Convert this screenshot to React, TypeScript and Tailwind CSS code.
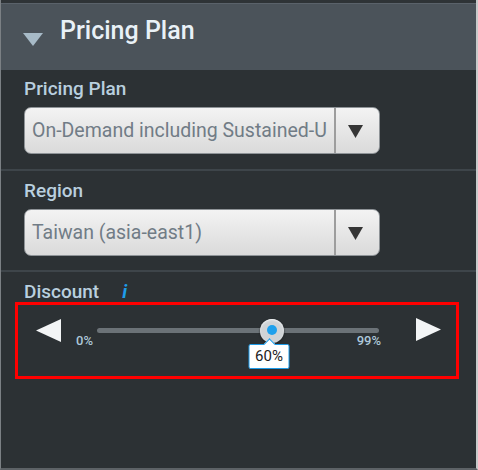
function Select({ value }: { value: string }) {
  return (
    <div className="flex h-[47px] w-[356px] overflow-hidden rounded-[7px] border border-[#8e9397] bg-linear-to-b from-[#f3f3f3] to-[#dadada]">
      <div className="flex flex-1 items-center overflow-hidden whitespace-nowrap pl-[7px] text-[19.5px] text-[#717c86]">
        {value}
      </div>
      <div className="w-[2px] bg-[#9d9d9d]" />
      <div className="flex w-[43px] items-center justify-center pr-[4px] pt-[2px]">
        <svg width="15" height="13" viewBox="0 0 15 13">
          <path d="M0 0H15L7.5 13Z" fill="#353535" />
        </svg>
      </div>
    </div>
  );
}

export default function App() {
  return (
    <div className="flex h-[470px] w-[478px] flex-col border-b-2 border-l border-r-2 border-b-[#5d6266] border-l-[#7b8084] border-r-[#c8cacb] bg-[#2c3134] font-[Roboto,sans-serif]">
      {/* top strip + collapsible header */}
      <div className="h-[3px] bg-[#2e3336]" />
      <div className="flex h-[67px] items-start border-t border-t-[#5a626a] bg-[#4b535a] px-[22px] pt-[12px]">
        <svg width="20" height="13" viewBox="0 0 20 13" className="mt-[17px]">
          <path d="M0 0H20L10 13Z" fill="#a7bac7" />
        </svg>
        <span className="ml-[17px] text-[25px] font-medium leading-[29px] text-[#e9f1f7]">Pricing Plan</span>
      </div>

      {/* pricing plan */}
      <div className="border-b-2 border-b-[#3e454a] px-[23px] pb-[15px] pt-[8px]">
        <div className="mb-[7px] text-[19px] font-medium leading-[22px] text-[#b9cfdf]">Pricing Plan</div>
        <Select value="On-Demand including Sustained-U" />
      </div>

      {/* region */}
      <div className="border-b-2 border-b-[#3e454a] px-[23px] pb-[14px] pt-[9px]">
        <div className="mb-[7px] text-[19px] font-medium leading-[22px] text-[#b9cfdf]">Region</div>
        <Select value="Taiwan (asia-east1)" />
      </div>

      {/* discount */}
      <div className="pt-[10px]">
        <div className="flex items-center pl-[23px] text-[19px] font-medium leading-[20px] text-[#b9cfdf]">
          Discount
          <span className="ml-[23px] font-bold italic text-[#1e9ce9]">i</span>
        </div>
        <div className="ml-[14px] flex h-[77px] w-[444px] items-start border-[3px] border-[#ff0000] pl-[18px] pt-[14px]">
          <svg width="25" height="23" viewBox="0 0 25 23">
            <path d="M0 11.5L25 0V23Z" fill="#f3f5f6" />
          </svg>
          <div className="ml-[15px] w-[305px] pt-[9px]">
            <div className="relative ml-[21px] h-[5px] w-[282px] rounded-full bg-[#6b7277]">
              <div className="absolute left-[62%] top-[2.5px] flex -translate-x-1/2 -translate-y-1/2 flex-col items-center">
                <div className="flex h-[24px] w-[24px] items-center justify-center rounded-full bg-[#cfd3d6] shadow-[inset_0_1px_2px_#f3f5f6,0_1px_2px_#1a1d1f]">
                  <div className="mb-[2px] h-[10px] w-[10px] rounded-full bg-[#1ea0ec]" />
                </div>
              </div>
              <div className="absolute left-[61%] top-[16px] -translate-x-1/2">
                <div className="relative flex h-[25px] w-[41px] items-center justify-center rounded-[2px] border-[1.5px] border-[#1e9ce9] bg-white text-[15px] leading-none text-[#222]">
                  <div className="absolute -top-[5px] left-1/2 h-[8px] w-[8px] -translate-x-1/2 rotate-45 border-l-[1.5px] border-t-[1.5px] border-[#1e9ce9] bg-white" />
                  <span className="relative">60%</span>
                </div>
              </div>
            </div>
            <div className="mt-[1px] flex justify-between text-[13px] font-medium leading-[14px] text-[#adc8da]">
              <span>0%</span>
              <span>99%</span>
            </div>
          </div>
          <svg width="25" height="23" viewBox="0 0 25 23" className="ml-[35px] -mt-[1px]">
            <path d="M25 11.5L0 0V23Z" fill="#f3f5f6" />
          </svg>
        </div>
      </div>
    </div>
  );
}
